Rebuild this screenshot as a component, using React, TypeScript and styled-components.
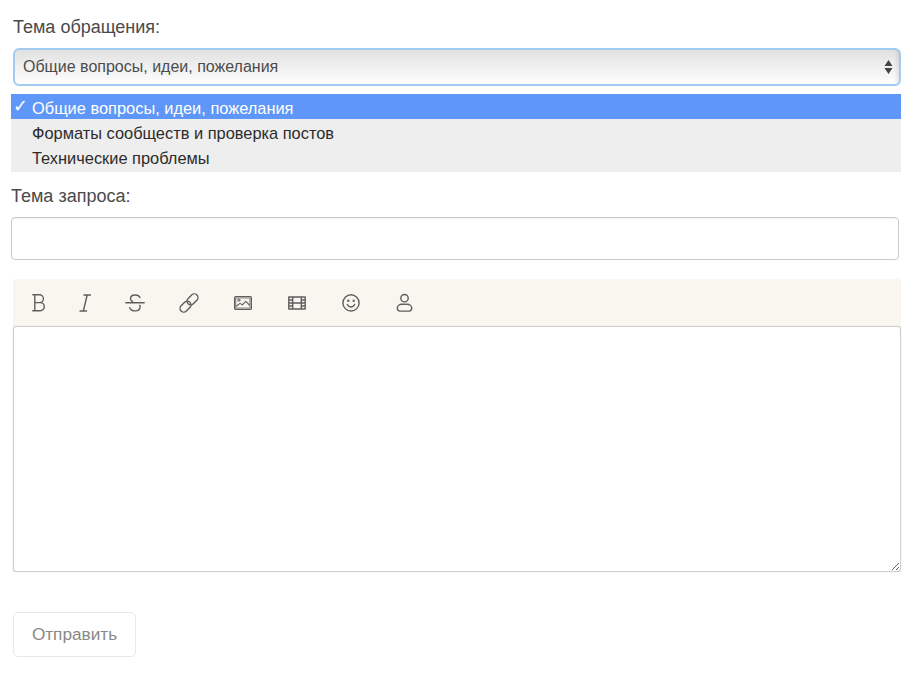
import * as React from "react";
import styled, { createGlobalStyle } from "styled-components";

const GlobalStyle = createGlobalStyle`
  html, body {
    margin: 0;
    padding: 0;
    background: #fff;
    font-family: "Liberation Sans", Arial, sans-serif;
  }
  * {
    box-sizing: border-box;
  }
`;

const Form = styled.form`
  width: 913px;
  height: 673px;
  padding: 16px 12px 0 11px;
  display: flex;
  flex-direction: column;
  overflow: hidden;
`;

const Label = styled.label<{ $indent?: boolean }>`
  display: block;
  font-size: 18px;
  line-height: 22px;
  color: #4a4a4a;
  margin-left: ${(p) => (p.$indent ? "2px" : "0")};
`;

const SelectBox = styled.div`
  position: relative;
  margin: 10px 0 0 2px;
  height: 38px;
  padding-left: 8px;
  display: flex;
  align-items: center;
  font-size: 16px;
  color: #4c4c4c;
  border: 2px solid #a3cbef;
  border-radius: 6px;
  background:
    linear-gradient(to left, rgba(0, 0, 0, 0.08) 0, rgba(0, 0, 0, 0) 5px),
    linear-gradient(to bottom, #e0e0e0 0%, #ececec 35%, #f8f8f8 80%, #ffffff 100%);
`;

const SelectArrows = styled.svg`
  position: absolute;
  right: 6px;
  top: 9px;
`;

const OptionList = styled.ul`
  list-style: none;
  margin: 8px 0 0;
  padding: 0;
  height: 78px;
  background: #eeeeee;
`;

const Option = styled.li<{ $selected?: boolean }>`
  position: relative;
  height: 25px;
  padding-left: 21px;
  font-size: 16.4px;
  line-height: 28px;
  color: ${(p) => (p.$selected ? "#ffffff" : "#2c2c2c")};
  background: ${(p) => (p.$selected ? "#5f97f8" : "transparent")};
`;

const Check = styled.span`
  position: absolute;
  left: 2px;
  top: -2px;
  font-family: "DejaVu Sans", sans-serif;
  font-size: 18px;
  font-weight: bold;
`;

const SubjectGroup = styled.div`
  margin-top: 13px;
`;

const SubjectInput = styled.input`
  display: block;
  width: 888px;
  height: 43px;
  margin-top: 10px;
  padding: 0 10px;
  border: 1px solid #cccccc;
  border-radius: 4px;
  background: #fff;
  outline: none;
  box-shadow: inset 0 1px 1px rgba(0, 0, 0, 0.05);
`;

const Editor = styled.div`
  margin: 19px 0 0 2px;
`;

const Toolbar = styled.div`
  height: 47px;
  padding-left: 19px;
  display: flex;
  align-items: center;
  background: #f9f6f0;
  border-radius: 3px 3px 0 0;
`;

const ToolButton = styled.span<{ $width: number }>`
  width: ${(p) => p.$width}px;
  display: flex;
  align-items: center;
  color: #5e5e5e;
`;

const Body = styled.textarea`
  display: block;
  width: 888px;
  height: 246px;
  padding: 8px;
  border: 1px solid #cfcfcf;
  border-radius: 3px;
  background: #fff;
  outline: none;
  resize: vertical;
  box-shadow: 0 0 1px rgba(0, 0, 0, 0.25);
`;

const SubmitButton = styled.button`
  width: 123px;
  height: 45px;
  margin: 40px 0 0 2px;
  border: 1px solid #e8e8e8;
  border-radius: 5px;
  background: #ffffff;
  color: #888888;
  font-family: "Liberation Sans", Arial, sans-serif;
  font-size: 17.2px;
`;

const iconProps = {
  fill: "none",
  stroke: "currentColor",
  strokeWidth: 1.4,
  strokeLinecap: "round" as const,
  strokeLinejoin: "round" as const,
};

const tools = [
  {
    name: "bold",
    step: 47,
    width: 14,
    draw: (
      <path d="M.8 1.800h6.700a3.800 3.800 0 0 1 0 7.800H2.800M2.800 9.600h5.400a4.100 4.100 0 0 1 0 8.200H.8M2.800 1.800v16" />
    ),
  },
  {
    name: "italic",
    step: 46,
    width: 12,
    draw: <path d="M5 2h6.500M1 18h6.500M8.200 2 4.300 18" />,
  },
  {
    name: "strike",
    step: 54,
    width: 20,
    draw: (
      <path d="M15 4.600C14.300 2.900 12.600 2 10.300 2 7.500 2 5.500 3.400 5.500 5.600c0 1.400.8 2.400 2.100 3M.8 9.700h18.400M14.900 12.300c.1.300.2.700.2 1.100 0 2.700-2.100 4.500-5.100 4.500-2.600 0-4.500-1.200-5.200-3.200" />
    ),
  },
  {
    name: "link",
    step: 55,
    width: 20,
    draw: (
      <>
        <rect x="0.300" y="10" width="12.400" height="7.400" rx="3.700" transform="rotate(-45 6.500 13.700)" />
        <rect x="7.300" y="2.600" width="12.400" height="7.400" rx="3.700" transform="rotate(-45 13.500 6.300)" />
      </>
    ),
  },
  {
    name: "image",
    step: 54,
    width: 18,
    draw: (
      <>
        <rect x="0.700" y="3.600" width="16.600" height="12.800" rx="1" />
        <rect x="2.200" y="5" width="13.600" height="10" strokeWidth={0.7} />
        <circle cx="4.800" cy="7.200" r="1.100" strokeWidth={1} />
        <path d="M2.600 13 6 10.400l2.400 1.500 3.400-3.500 3.600 3.600" strokeWidth={1.1} />
      </>
    ),
  },
  {
    name: "film",
    step: 54,
    width: 18,
    draw: (
      <path d="M.8 4h16.400v12H.8zM4.700 4v12M13.300 4v12M.8 7h3.900M.8 10h3.900M.8 13h3.900M13.300 7h3.900M13.300 10h3.900M13.300 13h3.900M4.700 10h8.600" />
    ),
  },
  {
    name: "smile",
    step: 54,
    width: 18,
    draw: (
      <>
        <circle cx="9" cy="9.900" r="8.100" />
        <path d="M5.300 11.500c.8 1.700 2.100 2.500 3.700 2.500s2.900-.8 3.700-2.500" />
        <circle cx="6.300" cy="7.800" r=".5" />
        <circle cx="11.700" cy="7.800" r=".5" />
      </>
    ),
  },
  {
    name: "user",
    step: 20,
    width: 18,
    draw: (
      <>
        <circle cx="8.500" cy="5.200" r="3.700" />
        <path d="M5.800 11.200h5.400c2.700 0 4.500 1.900 4.500 3.900 0 1.800-1.100 3-2.600 3H3.900c-1.500 0-2.600-1.200-2.600-3 0-2 1.800-3.900 4.500-3.900z" />
      </>
    ),
  },
];

const options = [
  "Общие вопросы, идеи, пожелания",
  "Форматы сообществ и проверка постов",
  "Технические проблемы",
];

const App: React.FC = () => {
  return (
    <Form>
      <GlobalStyle />
      <Label $indent>Тема обращения:</Label>
      <SelectBox>
        {options[0]}
        <SelectArrows width="9" height="16" viewBox="0 0 9 16">
          <path d="M4.500 1 8.500 7h-8zM4.500 15 .5 9h8z" fill="#444444" />
        </SelectArrows>
      </SelectBox>

      <OptionList>
        {options.map((option, index) => (
          <Option key={index} $selected={index === 0}>
            {index === 0 && <Check>✓</Check>}
            {option}
          </Option>
        ))}
      </OptionList>

      <SubjectGroup>
        <Label>Тема запроса:</Label>
        <SubjectInput type="text" />
      </SubjectGroup>

      <Editor>
        <Toolbar>
          {tools.map((tool) => (
            <ToolButton key={tool.name} $width={tool.step}>
              <svg
                width={tool.width}
                height="20"
                viewBox={`0 0 ${tool.width} 20`}
                {...iconProps}
              >
                {tool.draw}
              </svg>
            </ToolButton>
          ))}
        </Toolbar>
        <Body />
      </Editor>

      <SubmitButton type="button">Отправить</SubmitButton>
    </Form>
  );
};

export default App;
